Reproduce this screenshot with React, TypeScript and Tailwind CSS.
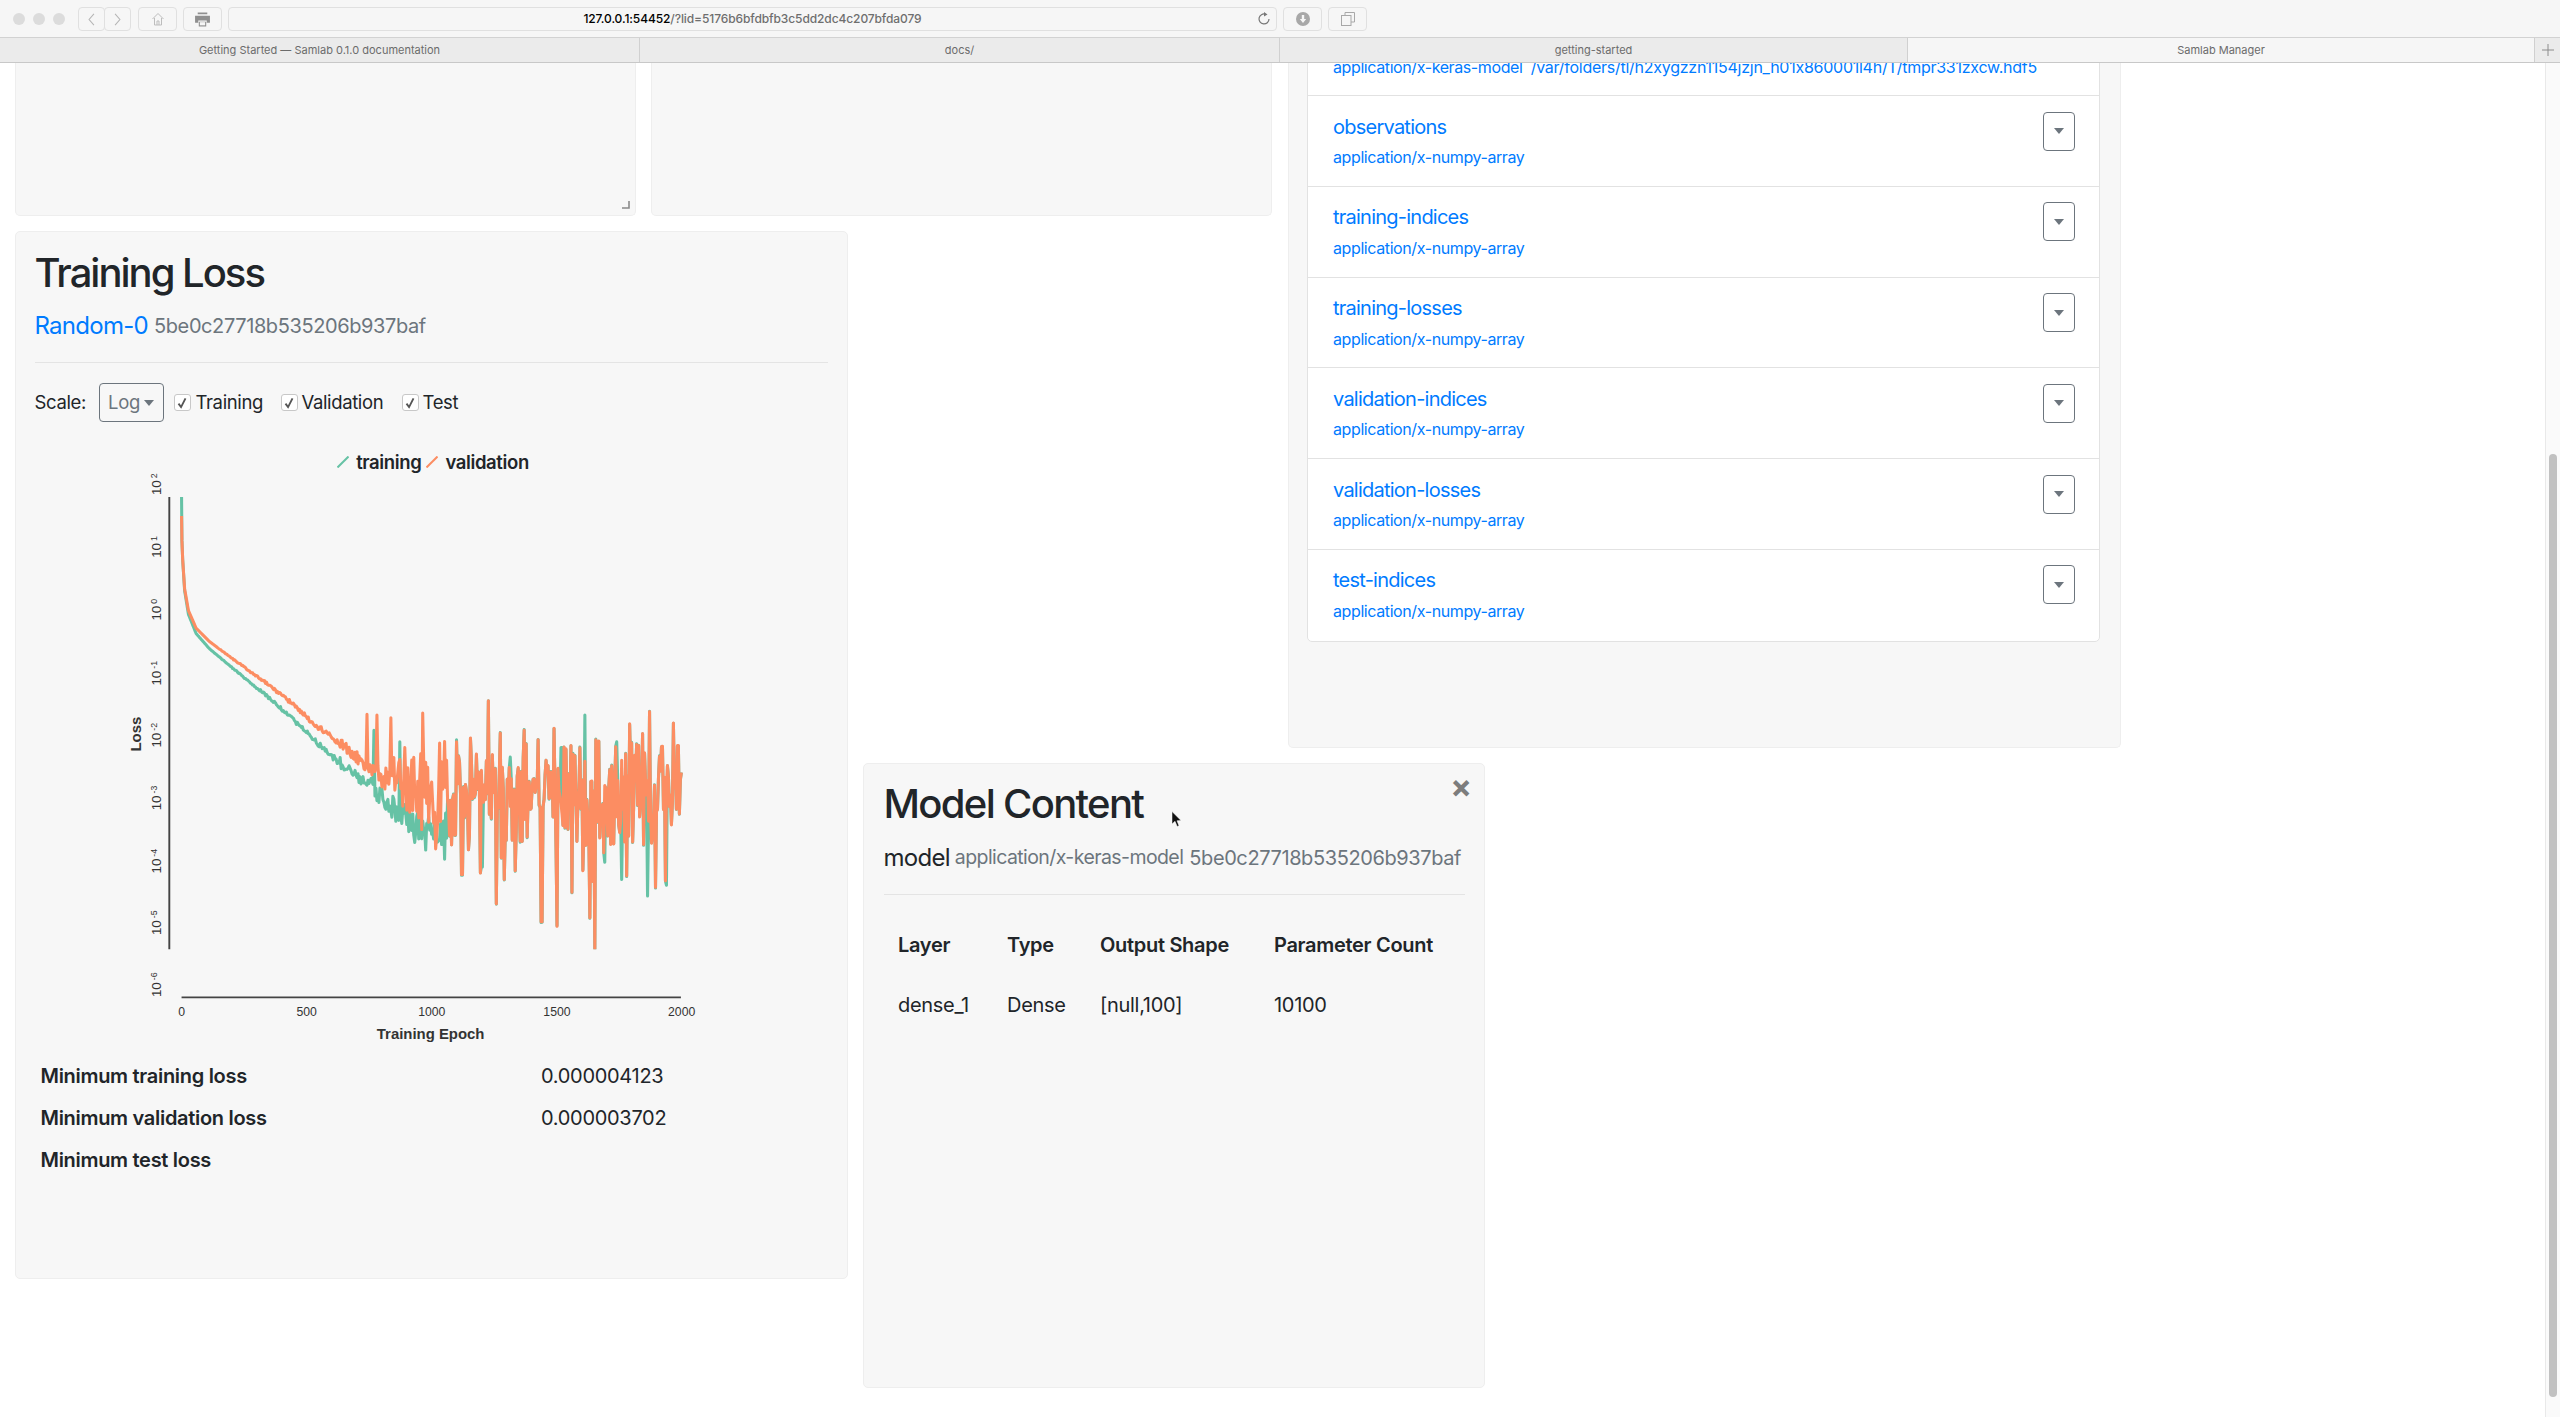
import React from "react";

const FONT = "font-['Inter','Liberation_Sans',sans-serif]";

function rng(seed: number) {
  let a = seed;
  return () => {
    a |= 0;
    a = (a + 0x6d2b79f5) | 0;
    let t = Math.imul(a ^ (a >>> 15), 1 | a);
    t = (t + Math.imul(t ^ (t >>> 7), 61 | t)) ^ t;
    return ((t ^ (t >>> 14)) >>> 0) / 4294967296;
  };
}

function interp(points: number[][], x: number) {
  for (let i = 1; i < points.length; i++) {
    if (x <= points[i][0]) {
      const [x0, y0] = points[i - 1];
      const [x1, y1] = points[i];
      return y0 + ((y1 - y0) * (x - x0)) / (x1 - x0);
    }
  }
  return points[points.length - 1][1];
}

const orangeMean = [[187, 145], [188, 210], [190, 260], [195, 335], [205, 392], [225, 438], [260, 473], [320, 518], [400, 575], [470, 630], [530, 685], [600, 740], [640, 770], [680, 810], [800, 860], [900, 885], [1495, 870]];
const greenMean = [[187, 95], [188, 210], [190, 260], [195, 340], [205, 402], [225, 452], [260, 492], [320, 542], [400, 607], [470, 668], [530, 727], [600, 790], [680, 850], [750, 915], [800, 950], [880, 965], [1000, 960], [1495, 900]];

const orangeSpikes: Record<number, number> = { 672: 663, 698: 665, 735: 672, 770: 750, 818: 660, 862: 738, 905: 735, 942: 725, 990: 628, 1020: 712, 1082: 705, 1118: 730, 1160: 700, 1205: 745, 1278: 733, 1322: 748, 1358: 688, 1375: 742, 1411: 656, 1473: 686, 1484: 745, 1010: 1158, 1128: 1205, 1168: 1217, 1255: 1195, 1262: 1100, 1268: 1277, 1208: 1128, 920: 1082, 968: 1078, 1030: 1095, 1058: 1072, 1235: 1072, 1350: 1085, 1425: 1115, 1452: 1098, 852: 1015 };
const greenSpikes: Record<number, number> = { 690: 705, 758: 735, 905: 730, 1045: 775, 1240: 665, 1323: 735, 1180: 750, 796: 998, 826: 1018, 875: 1042, 1405: 1138, 1337: 1095, 1453: 1110, 1293: 1050, 972: 1062 };

function buildCurves() {
  const r = rng(42);
  const green: string[] = [];
  const orange: string[] = [];
  for (let x = 187; x <= 1495; x += x < 240 ? 1 : 2.6) {
    let o = interp(orangeMean, x);
    let g = interp(greenMean, x);
    const n1 = r() - 0.5;
    const n2 = r() - 0.5;
    const n3 = r() - 0.5;
    if (x < 600) {
      const amp = x < 260 ? 0 : ((x - 260) / 340) * 16;
      o += n1 * amp;
      g += n2 * amp;
    } else if (x < 680) {
      o += n1 * 30;
      g += n2 * 30;
    } else {
      const t = Math.min(1, (x - 680) / 200);
      const tail = Math.sign(n1) * Math.pow(Math.abs(n1) * 2, 1.5) * 135;
      o += tail * (0.25 + 0.75 * t) + n3 * 70 * t;
      g = x < 880 ? g + n2 * (45 + 50 * t) : o + n2 * 5;
    }
    for (const k of Object.keys(orangeSpikes)) {
      if (Math.abs(+k - x) < 1.4) o = orangeSpikes[+k];
    }
    if (x >= 880) g = o + n2 * 5;
    for (const k of Object.keys(greenSpikes)) {
      if (Math.abs(+k - x) < 1.4) g = greenSpikes[+k];
    }
    orange.push(`${x.toFixed(1)},${o.toFixed(1)}`);
    green.push(`${x.toFixed(1)},${g.toFixed(1)}`);
  }
  return { green: green.join(" "), orange: orange.join(" ") };
}

const curves = buildCurves();

function YTick({ y, exp }: { y: number; exp: string }) {
  return (
    <text transform={`translate(134 ${y}) rotate(-90)`} textAnchor="middle" fontSize="35" fill="#333" fontFamily="Liberation Sans, sans-serif">
      10
      <tspan dy="-12" dx="5" fontSize="23">{exp}</tspan>
    </text>
  );
}

function Chart() {
  const yTicks: [number, string][] = [[62, "2"], [226, "1"], [390, "0"], [556, "-1"], [718, "-2"], [882, "-3"], [1047, "-4"], [1208, "-5"], [1370, "-6"]];
  const xTicks: [number, string][] = [[187, "0"], [514, "500"], [841, "1000"], [1168, "1500"], [1494, "2000"]];
  return (
    <svg viewBox="0 30 1568 1500" className="block w-[600px] h-[574px] ml-[75.5px] overflow-visible">
      <clipPath id="plot">
        <rect x="160" y="95" width="1400" height="1182" />
      </clipPath>
      <g clipPath="url(#plot)" fill="none" strokeLinejoin="round">
        <polyline points={curves.green} stroke="#66c2a5" strokeWidth="8" />
        <polyline points={curves.orange} stroke="#fc8d62" strokeWidth="8" />
      </g>
      <line x1="155" y1="95" x2="155" y2="1277" stroke="#444" strokeWidth="5" />
      <line x1="187" y1="1403" x2="1492" y2="1403" stroke="#444" strokeWidth="5" />
      {yTicks.map(([y, e]) => (
        <YTick key={e} y={y} exp={e} />
      ))}
      {xTicks.map(([x, t]) => (
        <text key={t} x={x} y="1452" textAnchor="middle" fontSize="32" fill="#333" fontFamily="Liberation Sans, sans-serif">
          {t}
        </text>
      ))}
      <text x="838" y="1511" textAnchor="middle" fontSize="39" fontWeight="700" fill="#333" fontFamily="Liberation Sans, sans-serif">
        Training Epoch
      </text>
      <text transform="translate(82 715) rotate(-90)" textAnchor="middle" fontSize="39" fontWeight="700" fill="#333" fontFamily="Liberation Sans, sans-serif">
        Loss
      </text>
    </svg>
  );
}

function Check() {
  return (
    <span className="flex h-[17px] w-[17px] shrink-0 items-center justify-center rounded-[3px] border border-[#c8c8c8] bg-white">
      <svg viewBox="0 0 12 12" className="h-[14px] w-[14px]">
        <path d="M3 6.5 L5.2 9.5 L9 2" fill="none" stroke="#555" strokeWidth="1.6" />
      </svg>
    </span>
  );
}

function Caret({ className }: { className: string }) {
  return <span className={`inline-block h-0 w-0 border-x-[5px] border-t-[6px] border-x-transparent ${className}`} />;
}

function ToolBtn({ className, children }: { className: string; children?: React.ReactNode }) {
  return (
    <div className={`flex h-[24px] items-center justify-center rounded-[4px] border border-[#e0e0e0] bg-[#f6f6f6] ${className}`}>
      {children}
    </div>
  );
}

function Toolbar() {
  return (
    <div className="flex h-[38px] shrink-0 items-center border-b border-[#d2d2d2] bg-[#f6f6f6] pt-[1px]">
      <div className="ml-[13px] flex gap-[8px]">
        <span className="h-[12px] w-[12px] rounded-full bg-[#dcdcdc]" />
        <span className="h-[12px] w-[12px] rounded-full bg-[#dcdcdc]" />
        <span className="h-[12px] w-[12px] rounded-full bg-[#dcdcdc]" />
      </div>
      <div className="ml-[13px] flex">
        <ToolBtn className="w-[27px]">
          <svg viewBox="0 0 10 16" className="h-[13px] w-[9px]">
            <path d="M8 1 L2 8 L8 15" fill="none" stroke="#b5b5b5" strokeWidth="1.3" />
          </svg>
        </ToolBtn>
        <ToolBtn className="ml-[-1px] w-[27px]">
          <svg viewBox="0 0 10 16" className="h-[13px] w-[9px]">
            <path d="M2 1 L8 8 L2 15" fill="none" stroke="#b5b5b5" strokeWidth="1.3" />
          </svg>
        </ToolBtn>
      </div>
      <ToolBtn className="ml-[7px] w-[39px]">
        <svg viewBox="0 0 14 14" className="h-[14px] w-[14px]">
          <path d="M1.5 7 L7 1.5 L12.5 7 M3.5 6 V13 H10.5 V6 M6 13 V9 H8 V13" fill="none" stroke="#bdbdbd" strokeWidth="1" />
        </svg>
      </ToolBtn>
      <ToolBtn className="ml-[6px] w-[39px]">
        <svg viewBox="0 0 16 14" className="h-[15px] w-[17px]">
          <path d="M3.5 0.5 H12.5 V2 H3.5 Z M1 3.5 H15 V10 H12 V8 H4 V10 H1 Z M4.5 9 H11.5 V13.5 H4.5 Z" fill="#8f8f8f" />
          <path d="M5.5 9.5 H10.5 V12.5 H5.5 Z" fill="#f6f6f6" />
        </svg>
      </ToolBtn>
      <div className="relative ml-[6px] flex h-[24px] w-[1049px] items-center justify-center rounded-[4px] border border-[#e0e0e0] bg-[#f6f6f6] text-[12px] font-medium tracking-[-0.1px]">
        <span className="text-black">127.0.0.1:54452</span>
        <span className="text-[#6e6e6e]">/?lid=5176b6bfdbfb3c5dd2dc4c207bfda079</span>
        <svg viewBox="0 0 14 14" className="absolute right-[5px] top-[4px] h-[14px] w-[14px]">
          <path d="M8.5 2.2 A5 5 0 1 0 12 7" fill="none" stroke="#777" strokeWidth="1.2" />
          <path d="M7 0 L10.5 2.4 L7 4.6 Z" fill="#777" />
        </svg>
      </div>
      <ToolBtn className="ml-[6px] w-[39px]">
        <svg viewBox="0 0 14 14" className="h-[14px] w-[14px]">
          <circle cx="7" cy="7" r="7" fill="#a8a8a8" />
          <path d="M5.8 3 H8.2 V7 H10.2 L7 11 L3.8 7 H5.8 Z" fill="#f6f6f6" />
        </svg>
      </ToolBtn>
      <ToolBtn className="ml-[6px] w-[39px]">
        <svg viewBox="0 0 14 14" className="h-[14px] w-[14px]">
          <path d="M4 3.5 V0.5 H13.5 V10 H10" fill="none" stroke="#a8a8a8" strokeWidth="1" />
          <rect x="0.5" y="3.5" width="9.5" height="10" fill="#f6f6f6" stroke="#a8a8a8" strokeWidth="1" />
        </svg>
      </ToolBtn>
    </div>
  );
}

function Tab({ title, className }: { title: string; className: string }) {
  return (
    <div className={`flex items-center justify-center border-r border-[#d0d0d0] pt-[1px] text-[11px] text-[#6b6b6b] ${className}`}>
      {title}
    </div>
  );
}

function Tabs() {
  return (
    <div className="flex h-[25px] shrink-0 border-b border-[#c8c8c8] bg-[#ebebeb]">
      <Tab title="Getting Started — Samlab 0.1.0 documentation" className="w-[640px]" />
      <Tab title="docs/" className="w-[640px]" />
      <Tab title="getting-started" className="w-[628px]" />
      <Tab title="Samlab Manager" className="w-[627px] bg-[#f6f6f6]" />
      <div className="flex flex-1 items-center justify-center">
        <svg viewBox="0 0 12 12" className="h-[12px] w-[12px]">
          <path d="M6 0 V12 M0 6 H12" stroke="#8c8c8c" strokeWidth="1" />
        </svg>
      </div>
    </div>
  );
}

const PANEL = "rounded-[5px] border border-[#eeeeee] bg-[#f7f7f7]";

function TrainingLoss() {
  return (
    <div className={`${PANEL} h-[1048px] w-[833px] shrink-0 pl-[18.5px] pr-[19px] pt-[16.5px] text-[#212529]`}>
      <h1 className="text-[40px] font-medium leading-[48px] tracking-[-0.05em]">Training Loss</h1>
      <div className="mt-[11px] flex h-[36px] items-center whitespace-nowrap">
        <span className="text-[24px] tracking-[-0.03em] text-[#007bff]">Random-0</span>
        <span className="ml-[6px] mt-[1px] text-[20px] tracking-[-0.02em] text-[#6c757d]">5be0c27718b535206b937baf</span>
      </div>
      <div className="mt-[18.5px] h-px bg-[#e4e4e4]" />
      <div className="mt-[20px] flex h-[39px] items-center text-[18.5px] tracking-[-0.02em]">
        <span className="w-[64px]">Scale:</span>
        <div className="flex h-[39px] w-[65px] items-center justify-center gap-[4px] rounded-[4px] border border-[#6c757d] text-[#6c757d]">
          Log
          <Caret className="border-t-[#6c757d]" />
        </div>
        <span className="ml-[10px]"><Check /></span>
        <span className="ml-[5px] w-[85px]">Training</span>
        <Check />
        <span className="ml-[4px] w-[100px]">Validation</span>
        <Check />
        <span className="ml-[4px]">Test</span>
      </div>
      <div className="mt-[30px] flex h-[20px] w-[797px] items-center justify-center text-[18.5px] font-semibold leading-[20px] tracking-[-0.02em]">
        <svg viewBox="0 0 12 12" className="h-[12px] w-[12px]">
          <line x1="0.5" y1="11.5" x2="11.5" y2="0.5" stroke="#66c2a5" strokeWidth="2" />
        </svg>
        <span className="ml-[7px]">training</span>
        <svg viewBox="0 0 12 12" className="ml-[5px] h-[12px] w-[12px]">
          <line x1="0.5" y1="11.5" x2="11.5" y2="0.5" stroke="#fc8d62" strokeWidth="2" />
        </svg>
        <span className="ml-[7px]">validation</span>
      </div>
      <Chart />
      <div className="ml-[6px] mt-[8.5px] grid grid-cols-[500.5px_auto] text-[20px] tracking-[-0.015em]">
        <div className="flex h-[42px] items-center font-semibold">Minimum training loss</div>
        <div className="flex h-[42px] items-center">0.000004123</div>
        <div className="flex h-[42px] items-center font-semibold">Minimum validation loss</div>
        <div className="flex h-[42px] items-center">0.000003702</div>
        <div className="flex h-[42px] items-center font-semibold">Minimum test loss</div>
        <div className="h-[42px]" />
      </div>
    </div>
  );
}

function ModelContent() {
  return (
    <div className={`${PANEL} relative ml-[15px] mt-[532px] h-[625px] w-[622px] shrink-0 pl-[19.5px] pr-[19px] pt-[16px] text-[#212529]`}>
      <span className="absolute right-[12px] top-[3px] text-[32px] font-bold leading-[40px] text-[#7d7d7d]">×</span>
      <svg viewBox="0 0 11 17" className="absolute left-[307px] top-[47px] h-[17px] w-[11px]">
        <path d="M1 0.5 V13 L4 10.3 L6.2 15.5 L8 14.7 L6 9.8 L10 9.5 Z" fill="#111" stroke="#fff" strokeWidth="0.5" />
      </svg>
      <h1 className="text-[40px] font-medium leading-[48px] tracking-[-0.042em]">Model Content</h1>
      <div className="mt-[11.5px] flex h-[36px] items-center whitespace-nowrap">
        <span className="text-[24px] tracking-[-0.03em]">model</span>
        <span className="ml-[5px] mt-[1px] text-[19.5px] tracking-[-0.03em] text-[#6c757d]">application/x-keras-model</span>
        <span className="ml-[6px] mt-[1px] text-[20px] tracking-[-0.02em] text-[#6c757d]">5be0c27718b535206b937baf</span>
      </div>
      <div className="mt-[18.5px] h-px bg-[#e4e4e4]" />
      <div className="ml-[14.5px] mt-[20px] grid grid-cols-[109px_93px_174px_auto] text-[20px] tracking-[-0.015em]">
        <div className="flex h-[60px] items-center font-semibold">Layer</div>
        <div className="flex h-[60px] items-center font-semibold">Type</div>
        <div className="flex h-[60px] items-center font-semibold">Output Shape</div>
        <div className="flex h-[60px] items-center font-semibold">Parameter Count</div>
        <div className="flex h-[60px] items-center">dense_1</div>
        <div className="flex h-[60px] items-center">Dense</div>
        <div className="flex h-[60px] items-center">[null,100]</div>
        <div className="flex h-[60px] items-center">10100</div>
      </div>
    </div>
  );
}

function ArtifactRow({ title, last }: { title: string; last?: boolean }) {
  return (
    <div className={`flex h-[90.8px] justify-between border-[#e2e2e2] pl-[25px] pr-[24px] pt-[15.5px] ${last ? "" : "border-b"}`}>
      <div className="text-[#007bff]">
        <div className="text-[20px] leading-[30px] tracking-[-0.038em]">{title}</div>
        <div className="mt-[3.5px] text-[16px] leading-[24px] tracking-[-0.025em]">application/x-numpy-array</div>
      </div>
      <div className="flex h-[39px] w-[32px] items-center justify-center rounded-[4px] border border-[#6c757d]">
        <Caret className="border-t-[#6c757d]" />
      </div>
    </div>
  );
}

function ArtifactPanel() {
  const rows = ["observations", "training-indices", "training-losses", "validation-indices", "validation-losses"];
  return (
    <div className={`${PANEL} ml-[16px] h-[685px] w-[833px] shrink-0 overflow-hidden rounded-t-none border-t-0 pl-[18px] pr-[20px]`}>
      <div className="mt-[-59px] rounded-b-[5px] border border-[#e2e2e2] bg-white">
        <div className="flex h-[91px] border-b border-[#e2e2e2] pl-[25px] pt-[50px]">
          <div className="whitespace-pre text-[16px] leading-[24px] tracking-[-0.025em] text-[#007bff]">
            application/x-keras-model  <span className="tracking-[-0.016em]">/var/folders/tl/h2xygzzn1154jzjn_h01x860001l4h/T/tmpr331zxcw.hdf5</span>
          </div>
        </div>
        {rows.map((t) => (
          <ArtifactRow key={t} title={t} />
        ))}
        <ArtifactRow title="test-indices" last />
      </div>
    </div>
  );
}

function EmptyPanels() {
  return (
    <div className="flex h-[153px] gap-[15px]">
      <div className={`${PANEL} relative w-[621px] rounded-t-none border-t-0`}>
        <svg viewBox="0 0 8 8" className="absolute bottom-[6px] right-[5px] h-[8px] w-[8px]">
          <path d="M7 0 V7 H0" fill="none" stroke="#8a8a8a" strokeWidth="1.6" />
        </svg>
      </div>
      <div className={`${PANEL} w-[621px] rounded-t-none border-t-0`} />
    </div>
  );
}

function Scrollbar() {
  return (
    <div className="absolute bottom-0 right-0 top-0 w-[15px] border-l border-[#e9e9e9] bg-[#fafafa]">
      <div className="absolute left-[3px] top-[391px] h-[943px] w-[8px] rounded-full bg-[#c1c1c1]" />
    </div>
  );
}

export default function App() {
  return (
    <div className={`flex h-screen w-full flex-col overflow-hidden bg-white ${FONT}`}>
      <Toolbar />
      <Tabs />
      <div className="relative flex min-h-0 flex-1 overflow-hidden pl-[15px]">
        <div className="w-[1257px] shrink-0">
          <EmptyPanels />
          <div className="mt-[15px] flex">
            <TrainingLoss />
            <ModelContent />
          </div>
        </div>
        <ArtifactPanel />
        <Scrollbar />
      </div>
    </div>
  );
}
